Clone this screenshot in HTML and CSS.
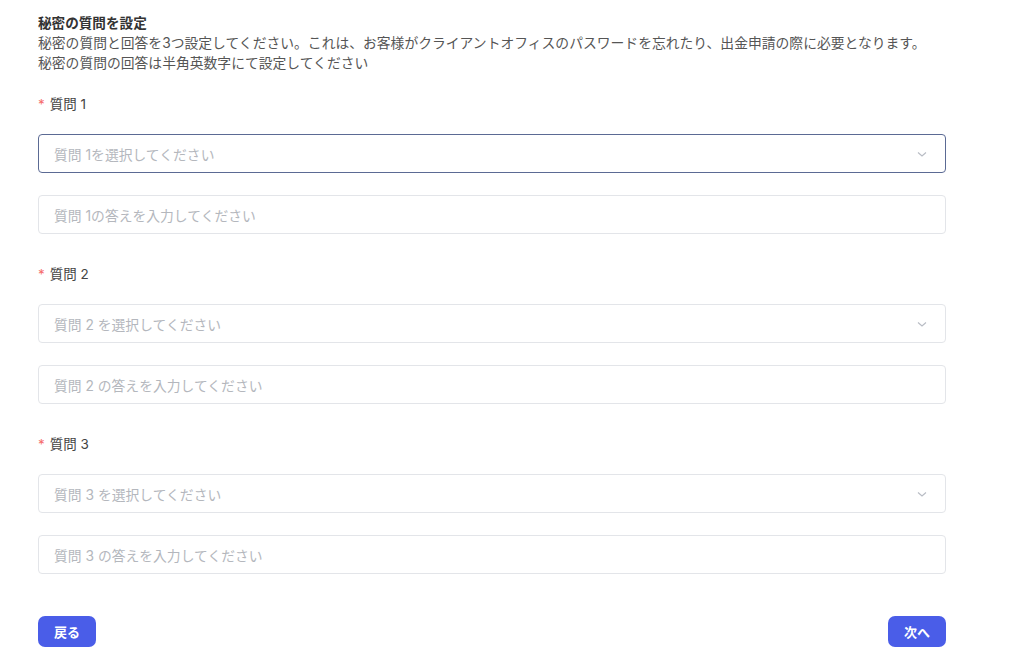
FILE: index.html
```html
<!DOCTYPE html>
<html lang="ja">
<head>
<meta charset="utf-8">
<link rel="stylesheet" href="styles.css">
</head>
<body>
<div class="page">
  <h1 class="title">秘密の質問を設定</h1>
  <p class="desc">秘密の質問と回答を3つ設定してください。これは、お客様がクライアントオフィスのパスワードを忘れたり、出金申請の際に必要となります。<br>秘密の質問の回答は半角英数字にて設定してください</p>

  <div class="group">
    <div class="label"><span class="req">*</span>質問 1</div>
    <div class="field select focused"><span class="ph">質問 1を選択してください</span><svg class="chev" viewBox="0 0 12 12" width="12" height="12"><path d="M2 4.5 L6 8 L10 4.5" fill="none" stroke="#b8bcc4" stroke-width="1.1"/></svg></div>
    <div class="field"><span class="ph">質問 1の答えを入力してください</span></div>
  </div>

  <div class="group">
    <div class="label"><span class="req">*</span>質問 2</div>
    <div class="field select"><span class="ph">質問 2 を選択してください</span><svg class="chev" viewBox="0 0 12 12" width="12" height="12"><path d="M2 4.5 L6 8 L10 4.5" fill="none" stroke="#b8bcc4" stroke-width="1.1"/></svg></div>
    <div class="field"><span class="ph">質問 2 の答えを入力してください</span></div>
  </div>

  <div class="group">
    <div class="label"><span class="req">*</span>質問 3</div>
    <div class="field select"><span class="ph">質問 3 を選択してください</span><svg class="chev" viewBox="0 0 12 12" width="12" height="12"><path d="M2 4.5 L6 8 L10 4.5" fill="none" stroke="#b8bcc4" stroke-width="1.1"/></svg></div>
    <div class="field"><span class="ph">質問 3 の答えを入力してください</span></div>
  </div>

  <div class="actions">
    <button class="btn">戻る</button>
    <button class="btn">次へ</button>
  </div>
</div>
</body>
</html>
```

FILE: styles.css
```css
html, body {
  margin: 0;
  padding: 0;
  background: #ffffff;
}
body {
  font-family: Inter, "Noto Sans CJK JP", sans-serif;
  color: #333;
}
.page {
  width: 908px;
  margin-left: 38px;
  padding-top: 13px;
}
.title {
  margin: 0;
  font-size: 13.6px;
  font-weight: 700;
  line-height: 20px;
  color: #333;
}
.desc {
  margin: 0;
  font-size: 13.8px;
  line-height: 20px;
  color: #555;
}
.group {
  margin-top: 21px;
}
.group + .group {
  margin-top: 30px;
}
.label {
  font-size: 13.5px;
  line-height: 20px;
  color: #444;
  margin-bottom: 20px;
}
.req {
  color: #f56c6c;
  margin-right: 5px;
}
.field {
  box-sizing: border-box;
  height: 39px;
  border: 1px solid #e3e5e9;
  border-radius: 4px;
  display: flex;
  align-items: center;
  padding: 0 15px;
  margin-bottom: 22px;
}
.field:last-child {
  margin-bottom: 0;
}
.field.focused {
  border-color: #5b6a94;
}
.select {
  justify-content: space-between;
}
.ph {
  font-size: 13.8px;
  color: #b4b7bd;
}
.chev {
  margin-right: 2px;
}
.actions {
  display: flex;
  justify-content: space-between;
  margin-top: 42px;
}
.btn {
  width: 58px;
  height: 31px;
  padding: 0;
  border: none;
  border-radius: 7px;
  background: #4a5de8;
  color: #fff;
  font-family: "Noto Sans CJK JP", sans-serif;
  font-size: 13px;
  font-weight: 700;
}
```
